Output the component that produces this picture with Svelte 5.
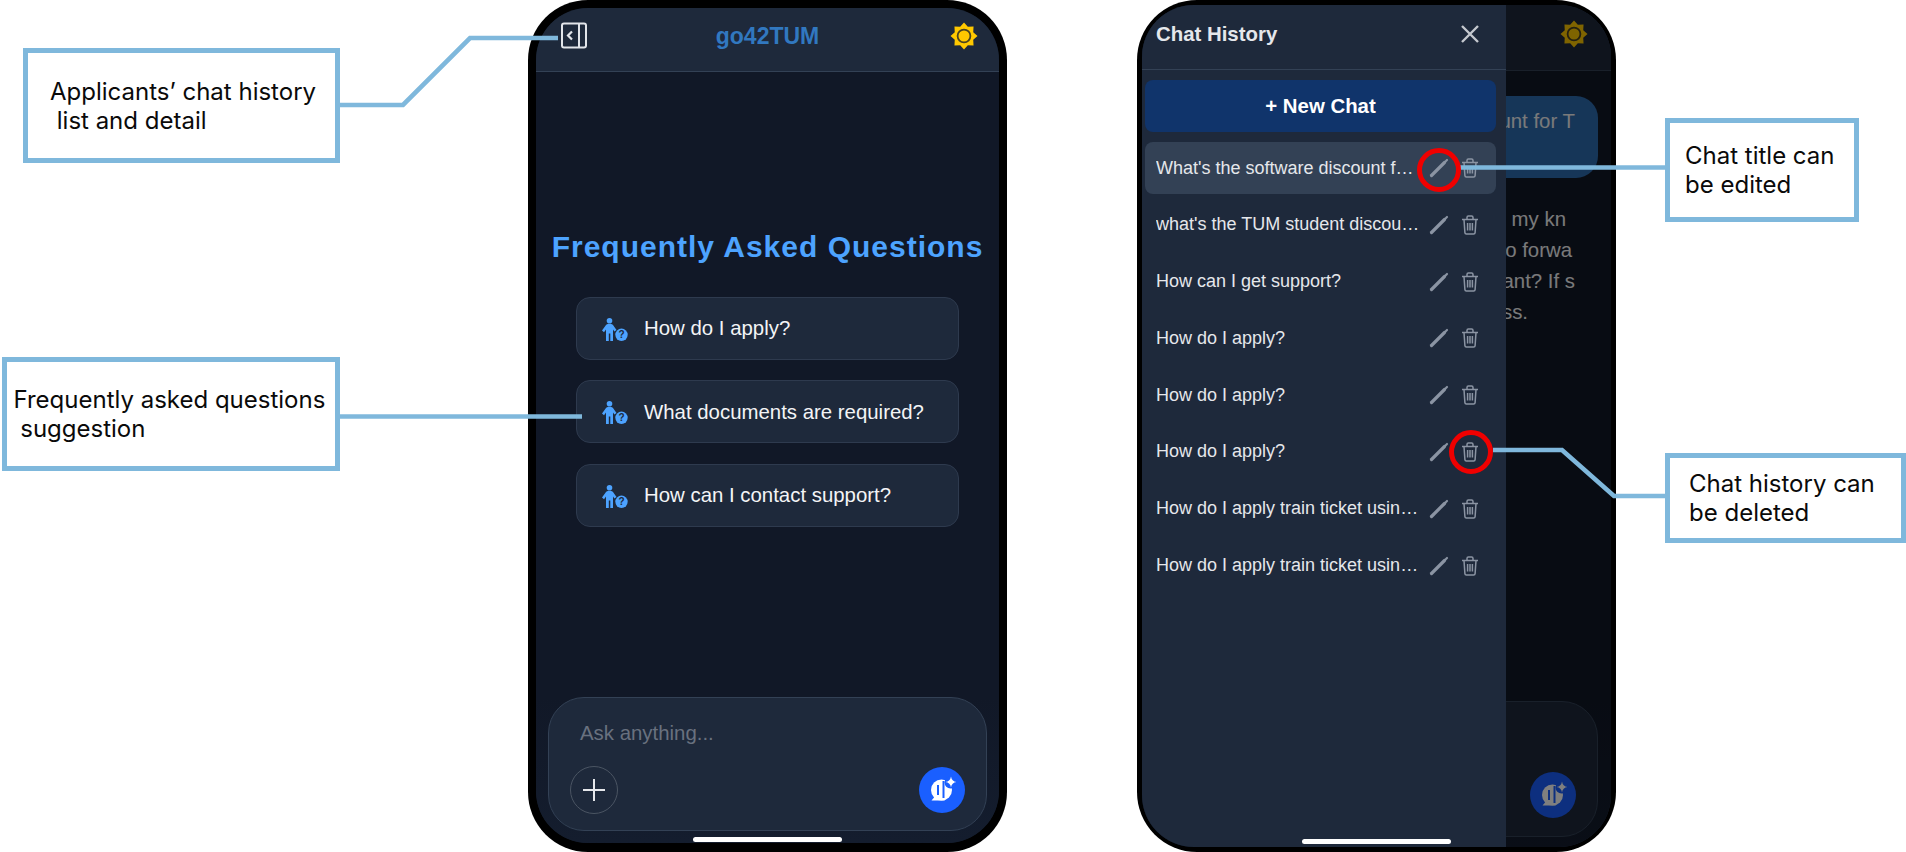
<script>
  const faqs = ['How do I apply?', 'What documents are required?', 'How can I contact support?'];
  const chats = [
    "What's the software discount for TUM students?",
    "what's the TUM student discount for software?",
    'How can I get support?',
    'How do I apply?',
    'How do I apply?',
    'How do I apply?',
    'How do I apply train ticket using student ID?',
    'How do I apply train ticket using student ID?'
  ];
  const sunPts = (() => {
    const p = [];
    for (let i = 0; i < 16; i++) {
      const r = i % 2 === 0 ? 13.5 : 10;
      const a = (i * Math.PI) / 8 - Math.PI / 2;
      p.push(`${(14 + r * Math.cos(a)).toFixed(2)},${(14 + r * Math.sin(a)).toFixed(2)}`);
    }
    return p.join(' ');
  })();
</script>

{#snippet sun()}
  <svg class="sun" width="28" height="28" viewBox="0 0 28 28">
    <polygon points={sunPts} fill="#ffc800" />
    <circle cx="14" cy="14" r="6.4" fill="#ffc800" stroke="#4a4320" stroke-width="1.8" />
  </svg>
{/snippet}

{#snippet send()}
  <div class="send">
    <svg width="46" height="46" viewBox="0 0 46 46">
      <circle cx="22.5" cy="23" r="10.5" fill="#fff" />
      <path d="M12.5 33.5 L26 33.5 L18 27 Z" fill="#fff" />
      <circle cx="31.5" cy="15.5" r="6" fill="#1a5fff" />
      <path d="M19 18 V28 M24.5 14 V31" stroke="#1a5fff" stroke-width="2" fill="none" />
      <path d="M32 9.5 Q32.7 14.3 37.5 15 Q32.7 15.7 32 20.5 Q31.3 15.7 26.5 15 Q31.3 14.3 32 9.5 Z" fill="#fff" />
    </svg>
  </div>
{/snippet}

<div class="canvas">
  <!-- left phone -->
  <div class="phone one">
    <div class="screen">
      <header class="bar">
        <svg width="28" height="27" viewBox="0 0 28 27" fill="none" stroke="#e2e5ea" stroke-width="2">
          <rect x="2" y="1.5" width="24" height="24" rx="2" />
          <path d="M19 1.5 V25.5" />
          <path d="M12 9.5 L8 13.5 L12 17.5" stroke-width="2.2" />
        </svg>
        <h1>go42TUM</h1>
        {@render sun()}
      </header>
      <main class="home">
        <h2>Frequently Asked Questions</h2>
        <div class="faqs">
          {#each faqs as q}
            <button class="faq">
              <svg width="26" height="23" viewBox="0 0 26 23">
                <circle cx="7.5" cy="2.8" r="2.8" fill="#4da3ff" />
                <path d="M0 12.5 L4 7 Q4.8 6 6 6 H9 Q10.2 6 11 7 L14.5 12 L12.4 13.6 L11 11.6 V23 H8.3 V15.5 H6.8 V23 H4 V11.6 L2 14.2 Z" fill="#4da3ff" />
                <circle cx="19.5" cy="16.8" r="6.2" fill="#4da3ff" />
                <text x="19.5" y="20.4" text-anchor="middle" class="qm">?</text>
              </svg>
              <span>{q}</span>
            </button>
          {/each}
        </div>
      </main>
      <div class="dock">
        <div class="composer">
          <div class="ph">Ask anything...</div>
          <div class="tools">
            <div class="plus">
              <svg width="24" height="24" viewBox="0 0 24 24" stroke="#e5e7eb" stroke-width="2"><path d="M12 1 V23 M1 12 H23" /></svg>
            </div>
            {@render send()}
          </div>
        </div>
      </div>
      <div class="homebar"></div>
    </div>
  </div>

  <!-- right phone -->
  <div class="phone two">
    <div class="screen">
      <header class="bar under">
        {@render sun()}
      </header>
      <main class="thread">
        <div class="bubble"><div class="line">discount for T</div></div>
        <div class="reply">
          <div class="line e1">beyond my kn</div>
          <div class="line e2">like to forwa</div>
          <div class="line e3">assistant? If s</div>
          <div class="line e4">address.</div>
        </div>
      </main>
      <div class="dock under">
        <div class="composer">
          <div class="tools end">
            {@render send()}
          </div>
        </div>
      </div>
      <div class="dim"></div>
      <aside class="side">
        <div class="side-head">
          <h3>Chat History</h3>
          <svg width="20" height="20" viewBox="0 0 20 20" stroke="#c4c8ce" stroke-width="2.4" fill="none"><path d="M2 2 L18 18 M18 2 L2 18" /></svg>
        </div>
        <div class="side-body">
          <button class="newchat">+ New Chat</button>
          <ul>
            {#each chats as c, i}
              <li class:active={i === 0}>
                <span class="t">{c}</span>
                <svg class="pen" width="20" height="20" viewBox="0 0 20 20" fill="none">
                  <path d="M2.5 17.5 L15.5 4.5" stroke="#8b94a3" stroke-width="3.2" stroke-linecap="round" />
                  <path d="M16 4 L18 2" stroke="#8b94a3" stroke-width="2.2" stroke-linecap="round" />
                </svg>
                <svg class="bin" width="18" height="20" viewBox="0 0 18 20" fill="none" stroke="#8b94a3" stroke-width="1.5">
                  <path d="M1 4.5 H17 M6 4.5 V2.4 Q6 1 7.4 1 H10.6 Q12 1 12 2.4 V4.5" />
                  <path d="M3 4.5 L3.9 17.6 Q4 19 5.4 19 H12.6 Q14 19 14.1 17.6 L15 4.5" />
                  <path d="M6.6 8 V15.5 M9 8 V15.5 M11.4 8 V15.5" />
                </svg>
              </li>
            {/each}
          </ul>
        </div>
      </aside>
      <div class="homebar"></div>
    </div>
  </div>

  <!-- callouts -->
  <div class="note n1"><span>Applicants’ chat history</span><span>{' list and detail'}</span></div>
  <div class="note n2"><span>Frequently asked questions</span><span>{' suggestion'}</span></div>
  <div class="note n3"><span>Chat title can</span><span>be edited</span></div>
  <div class="note n4"><span>Chat history can</span><span>be deleted</span></div>

  <svg class="wires" width="1906" height="852" viewBox="0 0 1906 852" fill="none">
    <g stroke="#7fb8dc" stroke-width="4.6">
      <path d="M339 105 H403 L470 38 H558" />
      <path d="M339 416.5 H582" />
      <path d="M1460 167.5 H1665" />
      <path d="M1493 450 H1562 L1614 496 H1665" />
    </g>
    <g stroke="#f00000" stroke-width="5">
      <circle cx="1439" cy="170" r="19.5" />
      <circle cx="1471" cy="452" r="19.5" />
    </g>
  </svg>
</div>

<style>
  :global(body) { margin: 0; background: #fff; }
  * { box-sizing: border-box; }
  .canvas {
    position: relative;
    width: 1906px;
    height: 852px;
    overflow: hidden;
    background: #fff;
    font-family: "Liberation Sans", Arial, sans-serif;
  }
  .phone {
    position: absolute;
    top: 0;
    width: 479px;
    height: 852px;
    background: #000;
    border-radius: 60px;
    display: flex;
  }
  .phone.one { left: 528px; padding: 8px 8px 9px; }
  .phone.two { left: 1137px; padding: 5px 5px 5px; }
  .screen {
    position: relative;
    flex: 1;
    display: flex;
    flex-direction: column;
    background: #111827;
    border-radius: 52px;
    overflow: hidden;
  }
  .bar {
    flex: none;
    display: flex;
    align-items: center;
    justify-content: space-between;
    background: #1e293b;
    border-bottom: 1.5px solid #334155;
    height: 64px;
    padding: 0 21px 8px 24px;
    position: relative;
  }
  .bar h1 {
    position: absolute;
    left: 0;
    right: 0;
    top: 14px;
    margin: 0;
    text-align: center;
    font-size: 23px;
    line-height: 28px;
    font-weight: 700;
    color: #3178c0;
  }
  .bar.under { height: 66px; justify-content: flex-end; padding: 0 23px 7px 0; }
  .home { flex: 1; display: flex; flex-direction: column; align-items: center; padding-top: 156.5px; }
  h2 {
    margin: 0;
    font-size: 30px;
    line-height: 36px;
    font-weight: 700;
    letter-spacing: 1px;
    color: #4da3ff;
  }
  .faqs { display: flex; flex-direction: column; gap: 20.7px; margin-top: 32px; }
  .faq {
    width: 383px;
    height: 63px;
    display: flex;
    align-items: center;
    gap: 16px;
    padding: 1px 0 0 25px;
    background: #1e293b;
    border: 1.5px solid #2e3a4e;
    border-radius: 14px;
    color: #f3f4f6;
    font: 400 20.4px "Liberation Sans", Arial, sans-serif;
    text-align: left;
  }
  .faq svg { margin-top: 1px; }
  .qm { font: 700 10px "Liberation Sans", Arial, sans-serif; fill: #1e293b; }
  .dock {
    flex: none;
    padding: 0 12px 12px;
    background: linear-gradient(#111827, #141d2e);
  }
  .composer {
    height: 134px;
    background: #1e293b;
    border: 1.5px solid #334155;
    border-radius: 36px;
    padding: 17px 21.5px 0 21px;
    display: flex;
    flex-direction: column;
  }
  .ph { font-size: 20.4px; line-height: 36px; color: #69717f; padding-left: 10px; height: 41px; }
  .tools { display: flex; align-items: center; justify-content: space-between; margin-top: 10px; }
  .tools.end { justify-content: flex-end; }
  .plus {
    width: 48px;
    height: 48px;
    border-radius: 50%;
    border: 1.5px solid #4b5563;
    display: flex;
    align-items: center;
    justify-content: center;
  }
  .send {
    width: 46px;
    height: 46px;
    border-radius: 50%;
    background: #1a5fff;
    display: flex;
  }
  .homebar {
    position: absolute;
    bottom: 1px;
    left: 157px;
    width: 149px;
    height: 5px;
    background: #fff;
    border-radius: 3px;
    z-index: 5;
  }
  .two .homebar { bottom: 3px; left: 160px; }
  .two .bar { background: #1e293b; }
  .thread { flex: 1; padding: 25px 13px 0; display: flex; flex-direction: column; }
  .line { font-size: 20.4px; line-height: 31px; color: #f3f4f6; text-align: right; white-space: nowrap; }
  .bubble {
    height: 82px;
    background: #2d6db0;
    border-radius: 0 22px 22px 22px;
    padding: 10px 23px 0 0;
  }
  .reply { margin-top: 26px; }
  .e1 { padding-right: 32px; }
  .e2 { padding-right: 26px; }
  .e3 { padding-right: 23px; }
  .e4 { padding-right: 70px; }
  .two .dock { padding: 0 13px 10px; }
  .two .composer { height: 136px; padding: 0 21px 0 0; justify-content: flex-end; }
  .two .tools { margin: 0 0 18px; }
  .dim { position: absolute; inset: 0; background: rgba(0, 0, 0, 0.5); }
  .side {
    position: absolute;
    left: 0;
    top: 0;
    bottom: 0;
    width: 364px;
    background: #1e293b;
    display: flex;
    flex-direction: column;
  }
  .side-head {
    height: 65px;
    flex: none;
    display: flex;
    align-items: center;
    justify-content: space-between;
    padding: 0 26px 6px 14px;
    border-bottom: 1.5px solid #334155;
  }
  h3 { margin: 0; font-size: 20.4px; font-weight: 700; color: #e5e7eb; }
  .side-body { padding: 10px 10px 0 3px; display: flex; flex-direction: column; }
  .newchat {
    height: 52px;
    border: 0;
    border-radius: 8px;
    background: #10346b;
    color: #fff;
    font: 700 20.4px "Liberation Sans", Arial, sans-serif;
  }
  ul { list-style: none; margin: 10px 0 0; padding: 0; display: flex; flex-direction: column; gap: 4.8px; }
  li {
    height: 52px;
    display: flex;
    align-items: center;
    padding: 0 17px 0 11px;
    border-radius: 8px;
    color: #e5e7eb;
    font-size: 18px;
  }
  li.active { background: #334155; }
  .t { width: 265px; overflow: hidden; white-space: nowrap; text-overflow: ellipsis; }
  .pen { margin-left: 9px; flex: none; }
  .bin { margin-left: 12px; flex: none; }
  .note {
    position: absolute;
    background: #fff;
    border: 5px solid #7fb8dc;
    display: flex;
    flex-direction: column;
    justify-content: center;
    font-family: Inter, sans-serif;
    font-size: 24px;
    line-height: 29px;
    color: #0a0a0a;
    white-space: pre;
  }
  .n1 { left: 23px; top: 48px; width: 317px; height: 115px; padding: 0 0 0 22px; }
  .n2 { left: 2px; top: 357px; width: 338px; height: 114px; padding: 0 0 0 6.5px; }
  .n3 { left: 1665px; top: 118px; width: 194px; height: 104px; padding: 0 0 0 15px; }
  .n4 { left: 1665px; top: 453px; width: 241px; height: 90px; padding: 0 0 0 19px; }
  .wires { position: absolute; left: 0; top: 0; pointer-events: none; }
</style>
